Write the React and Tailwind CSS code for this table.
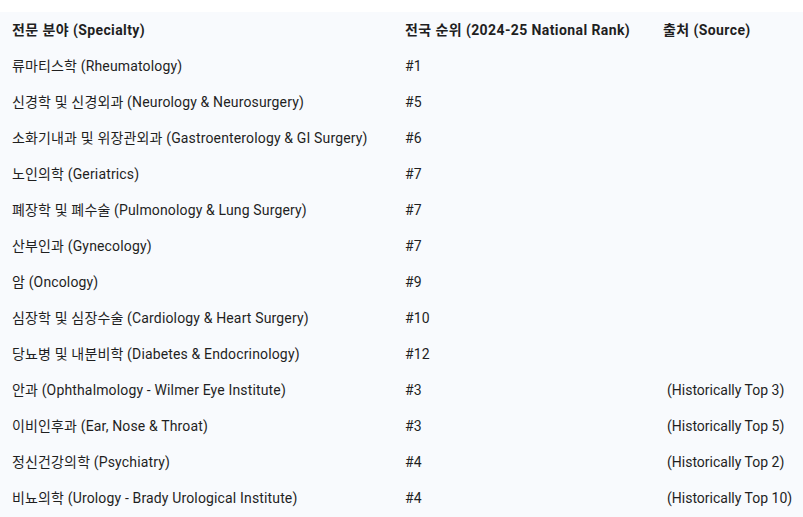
import React from "react";

const rows = [
  ["류마티스학 (Rheumatology)", "#1", ""],
  ["신경학 및 신경외과 (Neurology & Neurosurgery)", "#5", ""],
  ["소화기내과 및 위장관외과 (Gastroenterology & GI Surgery)", "#6", ""],
  ["노인의학 (Geriatrics)", "#7", ""],
  ["폐장학 및 폐수술 (Pulmonology & Lung Surgery)", "#7", ""],
  ["산부인과 (Gynecology)", "#7", ""],
  ["암 (Oncology)", "#9", ""],
  ["심장학 및 심장수술 (Cardiology & Heart Surgery)", "#10", ""],
  ["당뇨병 및 내분비학 (Diabetes & Endocrinology)", "#12", ""],
  ["안과 (Ophthalmology - Wilmer Eye Institute)", "#3", "(Historically Top 3)"],
  ["이비인후과 (Ear, Nose & Throat)", "#3", "(Historically Top 5)"],
  ["정신건강의학 (Psychiatry)", "#4", "(Historically Top 2)"],
  ["비뇨의학 (Urology - Brady Urological Institute)", "#4", "(Historically Top 10)"],
];

export default function App() {
  return (
    <div
      className="w-[803px] h-[517px] overflow-hidden bg-white pt-[12px] text-[#1f1f1f]"
      style={{ fontFamily: '"Roboto", "Noto Sans CJK KR", sans-serif' }}
    >
      <div className="bg-[#f8fafd] h-full">
        <div className="grid grid-cols-[405px_258px_1fr] h-[36px] items-center text-[14px] font-bold tracking-[0.4px]">
          <div className="pl-[12px]">전문 분야 (Specialty)</div>
          <div>전국 순위 (2024-25 National Rank)</div>
          <div>출처 (Source)</div>
        </div>
        {rows.map((r, i) => (
          <div key={i} className="grid grid-cols-[405px_258px_1fr] h-[36px] items-center text-[14px] tracking-[0.15px]">
            <div className="pl-[12px]">{r[0]}</div>
            <div>{r[1]}</div>
            <div className="pl-[4px] tracking-normal">{r[2]}</div>
          </div>
        ))}
      </div>
    </div>
  );
}
